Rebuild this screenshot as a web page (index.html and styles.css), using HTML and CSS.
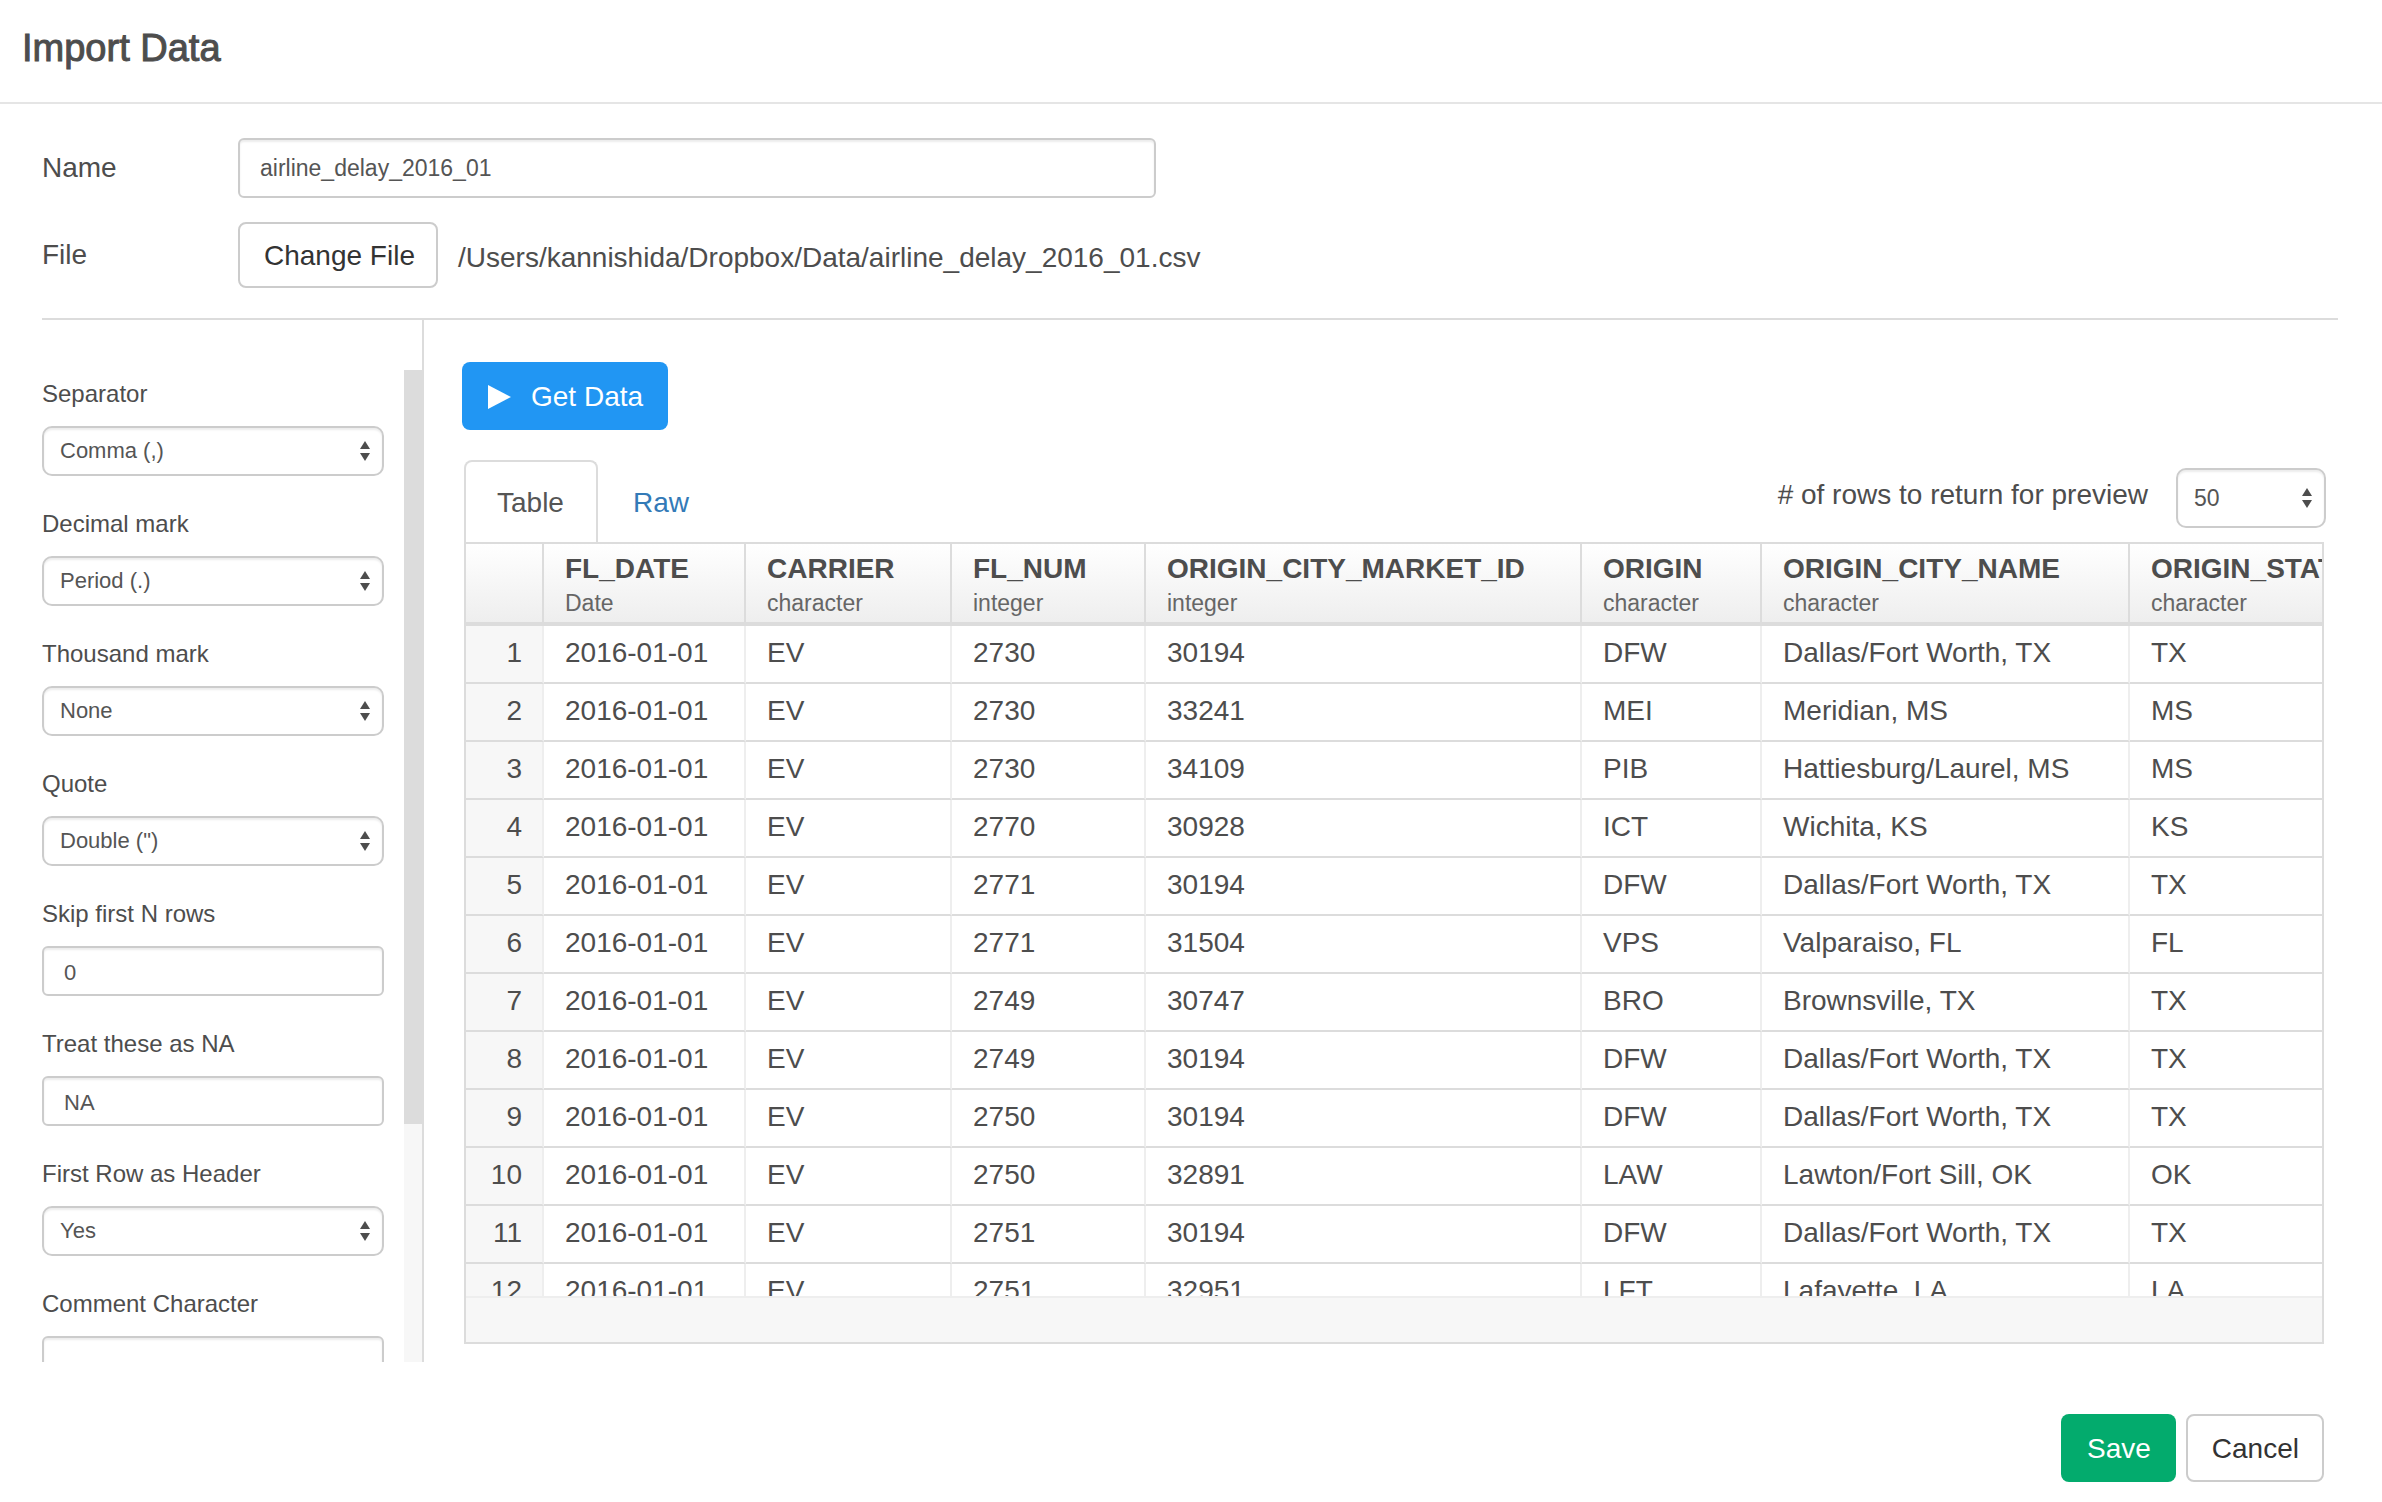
FILE: index.html
```html
<!DOCTYPE html>
<html lang="en">
<head>
<meta charset="utf-8">
<title>Import Data</title>
<link rel="stylesheet" href="styles.css">
</head>
<body>
<header class="page-header"><h1>Import Data</h1></header>

<section class="source">
  <div class="source-row">
    <label class="source-label" for="name">Name</label>
    <input class="input name-input" id="name" type="text" value="airline_delay_2016_01">
  </div>
  <div class="source-row">
    <label class="source-label" for="change-file">File</label>
    <button class="btn btn-file" id="change-file" type="button">Change File</button>
    <span class="path">/Users/kannishida/Dropbox/Data/airline_delay_2016_01.csv</span>
  </div>
</section>

<main class="workspace">
  <aside class="sidebar">
    <form class="options">
      <div class="field">
        <label for="separator">Separator</label>
        <div class="select"><select id="separator"><option>Comma (,)</option></select><svg class="arrows" viewBox="0 0 10 20"><path d="M5 0l5 8H0zM0 12h10l-5 8z"/></svg></div>
      </div>
      <div class="field">
        <label for="decimal">Decimal mark</label>
        <div class="select"><select id="decimal"><option>Period (.)</option></select><svg class="arrows" viewBox="0 0 10 20"><path d="M5 0l5 8H0zM0 12h10l-5 8z"/></svg></div>
      </div>
      <div class="field">
        <label for="thousand">Thousand mark</label>
        <div class="select"><select id="thousand"><option>None</option></select><svg class="arrows" viewBox="0 0 10 20"><path d="M5 0l5 8H0zM0 12h10l-5 8z"/></svg></div>
      </div>
      <div class="field">
        <label for="quote">Quote</label>
        <div class="select"><select id="quote"><option>Double (")</option></select><svg class="arrows" viewBox="0 0 10 20"><path d="M5 0l5 8H0zM0 12h10l-5 8z"/></svg></div>
      </div>
      <div class="field">
        <label for="skip">Skip first N rows</label>
        <input class="input" id="skip" type="text" value="0">
      </div>
      <div class="field">
        <label for="na">Treat these as NA</label>
        <input class="input" id="na" type="text" value="NA">
      </div>
      <div class="field">
        <label for="header-row">First Row as Header</label>
        <div class="select"><select id="header-row"><option>Yes</option></select><svg class="arrows" viewBox="0 0 10 20"><path d="M5 0l5 8H0zM0 12h10l-5 8z"/></svg></div>
      </div>
      <div class="field">
        <label for="comment">Comment Character</label>
        <input class="input" id="comment" type="text">
      </div>
    </form>
    <div class="scroll-track"><div class="scroll-thumb"></div></div>
  </aside>

  <section class="preview">
    <button class="btn btn-primary" type="button"><svg class="play" viewBox="0 0 23 24"><path d="M0 0l23 12L0 24z"/></svg>Get Data</button>
    <div class="preview-bar">
      <nav class="tabs">
        <a class="tab tab-active" href="#table">Table</a>
        <a class="tab" href="#raw">Raw</a>
      </nav>
      <div class="row-count">
        <label for="rows"># of rows to return for preview</label>
        <div class="select"><select id="rows"><option>50</option></select><svg class="arrows" viewBox="0 0 10 20"><path d="M5 0l5 8H0zM0 12h10l-5 8z"/></svg></div>
      </div>
    </div>
    <div class="grid" id="table">
      <div class="grid-view">
        <table>
          <colgroup><col class="c-index"><col class="c-date"><col class="c-carrier"><col class="c-num"><col class="c-market"><col class="c-origin"><col class="c-city"><col class="c-state"></colgroup>
          <thead>
            <tr>
              <th></th>
              <th>FL_DATE<span class="type">Date</span></th>
              <th>CARRIER<span class="type">character</span></th>
              <th>FL_NUM<span class="type">integer</span></th>
              <th>ORIGIN_CITY_MARKET_ID<span class="type">integer</span></th>
              <th>ORIGIN<span class="type">character</span></th>
              <th>ORIGIN_CITY_NAME<span class="type">character</span></th>
              <th>ORIGIN_STATE<span class="type">character</span></th>
            </tr>
          </thead>
          <tbody>
            <tr><td>1</td><td>2016-01-01</td><td>EV</td><td>2730</td><td>30194</td><td>DFW</td><td>Dallas/Fort Worth, TX</td><td>TX</td></tr>
            <tr><td>2</td><td>2016-01-01</td><td>EV</td><td>2730</td><td>33241</td><td>MEI</td><td>Meridian, MS</td><td>MS</td></tr>
            <tr><td>3</td><td>2016-01-01</td><td>EV</td><td>2730</td><td>34109</td><td>PIB</td><td>Hattiesburg/Laurel, MS</td><td>MS</td></tr>
            <tr><td>4</td><td>2016-01-01</td><td>EV</td><td>2770</td><td>30928</td><td>ICT</td><td>Wichita, KS</td><td>KS</td></tr>
            <tr><td>5</td><td>2016-01-01</td><td>EV</td><td>2771</td><td>30194</td><td>DFW</td><td>Dallas/Fort Worth, TX</td><td>TX</td></tr>
            <tr><td>6</td><td>2016-01-01</td><td>EV</td><td>2771</td><td>31504</td><td>VPS</td><td>Valparaiso, FL</td><td>FL</td></tr>
            <tr><td>7</td><td>2016-01-01</td><td>EV</td><td>2749</td><td>30747</td><td>BRO</td><td>Brownsville, TX</td><td>TX</td></tr>
            <tr><td>8</td><td>2016-01-01</td><td>EV</td><td>2749</td><td>30194</td><td>DFW</td><td>Dallas/Fort Worth, TX</td><td>TX</td></tr>
            <tr><td>9</td><td>2016-01-01</td><td>EV</td><td>2750</td><td>30194</td><td>DFW</td><td>Dallas/Fort Worth, TX</td><td>TX</td></tr>
            <tr><td>10</td><td>2016-01-01</td><td>EV</td><td>2750</td><td>32891</td><td>LAW</td><td>Lawton/Fort Sill, OK</td><td>OK</td></tr>
            <tr><td>11</td><td>2016-01-01</td><td>EV</td><td>2751</td><td>30194</td><td>DFW</td><td>Dallas/Fort Worth, TX</td><td>TX</td></tr>
            <tr><td>12</td><td>2016-01-01</td><td>EV</td><td>2751</td><td>32951</td><td>LFT</td><td>Lafayette, LA</td><td>LA</td></tr>
          </tbody>
        </table>
      </div>
      <div class="grid-foot"></div>
    </div>
  </section>
</main>

<footer class="actions">
  <button class="btn btn-save" type="button">Save</button>
  <button class="btn btn-cancel" type="button">Cancel</button>
</footer>
</body>
</html>
```
FILE: styles.css
```css
* { box-sizing: border-box; }

body {
  margin: 0;
  height: 100vh;
  display: flex;
  flex-direction: column;
  overflow: hidden;
  background: #fff;
  color: #4d4d4d;
  font: 28px/32px "Liberation Sans", Arial, Helvetica, sans-serif;
}

input, select, button { font: inherit; color: inherit; margin: 0; }

.page-header {
  padding: 24px 22px 30px;
  border-bottom: 2px solid #e5e5e5;
}
h1 {
  margin: 0;
  font-size: 38px;
  line-height: 48px;
  font-weight: 400;
  -webkit-text-stroke: 1px #4d4d4d;
}

/* Source name and file */
.source {
  margin: 0 44px 0 42px;
  padding: 34px 0 30px;
  border-bottom: 2px solid #dcdcdc;
  display: flex;
  flex-direction: column;
  gap: 24px;
}
.source-row { display: flex; align-items: center; }
.source-label { width: 196px; }
.path { margin-left: 20px; padding-top: 6px; }

.input, .select select {
  display: block;
  width: 100%;
  height: 50px;
  border: 2px solid #ccc;
  background: #fff;
  box-shadow: inset 0 2px 2px rgba(0, 0, 0, .075);
  color: #555;
  font-size: 22px;
  outline: 0;
}
.input { border-radius: 6px; padding: 4px 20px 0; }
.name-input { width: 918px; height: 60px; padding: 0 20px; font-size: 23px; }
.select { position: relative; }
.select select { appearance: none; border-radius: 10px; padding: 0 30px 0 16px; }
.arrows {
  position: absolute;
  right: 14px;
  top: 50%;
  width: 10px;
  height: 20px;
  margin-top: -10px;
  fill: #4d4d4d;
  pointer-events: none;
}

.btn {
  border: 2px solid transparent;
  border-radius: 8px;
  padding: 2px 23px 0 24px;
  height: 68px;
  white-space: nowrap;
}
.btn-file { height: 66px; width: 200px; border-color: #ccc; background: #fff; color: #333; }
.btn-primary {
  align-self: flex-start;
  display: flex;
  align-items: center;
  gap: 20px;
  background: #2196f3;
  color: #fff;
}
.play { width: 23px; height: 24px; fill: #fff; }

/* Options and preview */
.workspace {
  flex: 1;
  min-height: 0;
  margin: 0 44px 0 42px;
  display: flex;
}
.sidebar {
  flex: none;
  width: 382px;
  padding-top: 50px;
  border-right: 2px solid #dcdcdc;
  display: flex;
}
.options {
  flex: 1;
  margin-right: 20px;
  padding-top: 10px;
  overflow: hidden;
  display: flex;
  flex-direction: column;
  gap: 34px;
}
.field { flex: none; display: flex; flex-direction: column; gap: 18px; font-size: 24px; line-height: 28px; }
.scroll-track { width: 18px; background: #f7f7f7; }
.scroll-thumb { width: 20px; height: 76%; background: #dcdcdc; }

.preview {
  flex: 1;
  min-width: 0;
  padding: 42px 12px 18px 38px;
  display: flex;
  flex-direction: column;
}
.preview-bar {
  margin-top: 30px;
  display: flex;
  justify-content: space-between;
  align-items: flex-start;
}
.tabs { display: flex; gap: 2px; margin-left: 2px; }
.tab {
  height: 82px;
  padding: 0 32px 0 31px;
  border: 2px solid transparent;
  border-bottom: 0;
  border-radius: 8px 8px 0 0;
  line-height: 82px;
  color: #337ab7;
  text-decoration: none;
}
.tab-active { border-color: #dcdcdc; color: #555; }
.row-count { display: flex; gap: 28px; padding-top: 8px; }
.row-count label { line-height: 54px; }
.row-count .select { width: 150px; }
.row-count select { height: 60px; font-size: 23px; }

.grid {
  flex: 1;
  min-height: 0;
  margin: 0 2px;
  border: 2px solid #dcdcdc;
  display: flex;
  flex-direction: column;
}
.grid-view { flex: 1; min-height: 0; overflow: hidden; }
.grid-foot { height: 46px; border-top: 2px solid #eee; background: #f7f7f7; }

table { width: 100%; table-layout: fixed; border-collapse: separate; border-spacing: 0; }
.c-index { width: 78px; }
.c-date { width: 202px; }
.c-carrier { width: 206px; }
.c-num { width: 194px; }
.c-market { width: 436px; }
.c-origin { width: 180px; }
.c-city { width: 368px; }
.c-state { width: 260px; }

th {
  height: 82px;
  padding: 7px 0 0 21px;
  border-right: 2px solid #dcdcdc;
  border-bottom: 4px solid #dcdcdc;
  background: linear-gradient(#fff, #eee);
  line-height: 35px;
  text-align: left;
  vertical-align: top;
  white-space: nowrap;
}
.type { display: block; font-size: 23px; font-weight: 400; color: #666; }
td {
  padding: 11px 0 13px 21px;
  border-right: 2px solid #eee;
  border-bottom: 2px solid #dcdcdc;
  white-space: nowrap;
}
td:first-child { padding: 11px 20px 13px 0; background: #f7f7f7; text-align: right; }

.actions {
  display: flex;
  justify-content: flex-end;
  gap: 10px;
  padding: 52px 58px 20px;
}
.btn-save { background: #03ab6d; color: #fff; }
.btn-cancel { border-color: #ccc; background: #fff; color: #333; }
```
